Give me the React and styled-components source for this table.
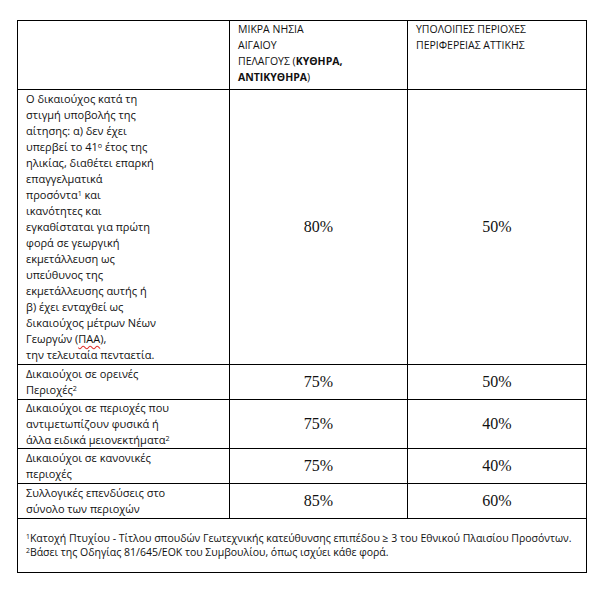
import React from "react";
import styled, { createGlobalStyle } from "styled-components";

const GlobalStyle = createGlobalStyle`
  html, body {
    margin: 0;
    padding: 0;
    background: #ffffff;
  }
`;

const Page = styled.div`
  padding: 20px 0 0 17px;
`;

const Table = styled.table`
  border-collapse: collapse;
  table-layout: fixed;
  width: 570px;
  font-family: "Open Sans", "Noto Sans", sans-serif;
  font-size: 11px;
  color: #111;

  td {
    border: 1px solid #000;
  }
`;

const Line = styled.div`
  line-height: 16px;
  white-space: nowrap;
`;

const HeadCell = styled.td`
  vertical-align: top;
  padding: 0 8px 4px 8px;
  font-size: 10.5px;
  b {
    font-weight: 700;
  }
`;

const TextCell = styled.td`
  vertical-align: top;
  padding: ${(p) => (p.$tight ? "0 8px" : "1px 8px")};
`;

const Rate = styled.td`
  text-align: center;
  vertical-align: middle;
  font-family: "Liberation Serif", "Times New Roman", serif;
  font-size: 16px;
  color: #111;
`;

const Sup = styled.sup`
  font-size: 0.65em;
  line-height: 0;
  vertical-align: 0.45em;
`;

const Spell = styled.span`
  text-decoration: underline wavy #e0302a;
  text-decoration-skip-ink: none;
  text-underline-offset: 2px;
`;

const Notes = styled.td`
  padding: 12px 8px 13px 8px;
  font-size: 10.5px;
`;

const Note = styled.div`
  line-height: 14px;
  white-space: nowrap;
`;

const bigLines = [
  "Ο δικαιούχος κατά τη",
  "στιγμή υποβολής της",
  "αίτησης: α) δεν έχει",
  <>υπερβεί το 41<Sup>ο</Sup> έτος της</>,
  "ηλικίας, διαθέτει επαρκή",
  "επαγγελματικά",
  <>προσόντα<Sup>1</Sup> και</>,
  "ικανότητες και",
  "εγκαθίσταται για πρώτη",
  "φορά σε γεωργική",
  "εκμετάλλευση ως",
  "υπεύθυνος της",
  "εκμετάλλευσης αυτής ή",
  "β) έχει ενταχθεί ως",
  "δικαιούχος μέτρων Νέων",
  <>Γεωργών (<Spell>ΠΑΑ</Spell>),</>,
  "την τελευταία πενταετία.",
];

const rows = [
  { lines: ["Δικαιούχοι σε ορεινές", <>Περιοχές<Sup>2</Sup></>], a: "75%", b: "50%" },
  {
    lines: [
      "Δικαιούχοι σε περιοχές που",
      "αντιμετωπίζουν φυσικά ή",
      <>άλλα ειδικά μειονεκτήματα<Sup>2</Sup></>,
    ],
    a: "75%",
    b: "40%",
    tight: true,
  },
  { lines: ["Δικαιούχοι σε κανονικές", "περιοχές"], a: "75%", b: "40%" },
  { lines: ["Συλλογικές επενδύσεις στο", "σύνολο των περιοχών"], a: "85%", b: "60%" },
];

function Lines({ items }) {
  return items.map((l, i) => <Line key={i}>{l}</Line>);
}

export default function App() {
  return (
    <Page>
      <GlobalStyle />
      <Table>
        <colgroup>
          <col style={{ width: 212 }} />
          <col style={{ width: 178 }} />
          <col style={{ width: 179 }} />
        </colgroup>
        <tbody>
          <tr>
            <HeadCell />
            <HeadCell>
              <Line>ΜΙΚΡΑ ΝΗΣΙΑ</Line>
              <Line>ΑΙΓΑΙΟΥ</Line>
              <Line>
                ΠΕΛΑΓΟΥΣ (<b>ΚΥΘΗΡΑ,</b>
              </Line>
              <Line>
                <b>ΑΝΤΙΚΥΘΗΡΑ</b>)
              </Line>
            </HeadCell>
            <HeadCell>
              <Line>ΥΠΟΛΟΙΠΕΣ ΠΕΡΙΟΧΕΣ</Line>
              <Line>ΠΕΡΙΦΕΡΕΙΑΣ ΑΤΤΙΚΗΣ</Line>
            </HeadCell>
          </tr>
          <tr>
            <TextCell>
              <Lines items={bigLines} />
            </TextCell>
            <Rate>80%</Rate>
            <Rate>50%</Rate>
          </tr>
          {rows.map((r, i) => (
            <tr key={i}>
              <TextCell $tight={r.tight}>
                <Lines items={r.lines} />
              </TextCell>
              <Rate>{r.a}</Rate>
              <Rate>{r.b}</Rate>
            </tr>
          ))}
          <tr>
            <Notes colSpan={3}>
              <Note>
                <Sup>1</Sup>Κατοχή Πτυχίου - Τίτλου σπουδών Γεωτεχνικής
                κατεύθυνσης επιπέδου ≥ 3 του Εθνικού Πλαισίου Προσόντων.
              </Note>
              <Note>
                <Sup>2</Sup>Βάσει της Οδηγίας 81/645/ΕΟΚ του Συμβουλίου, όπως
                ισχύει κάθε φορά.
              </Note>
            </Notes>
          </tr>
        </tbody>
      </Table>
    </Page>
  );
}
